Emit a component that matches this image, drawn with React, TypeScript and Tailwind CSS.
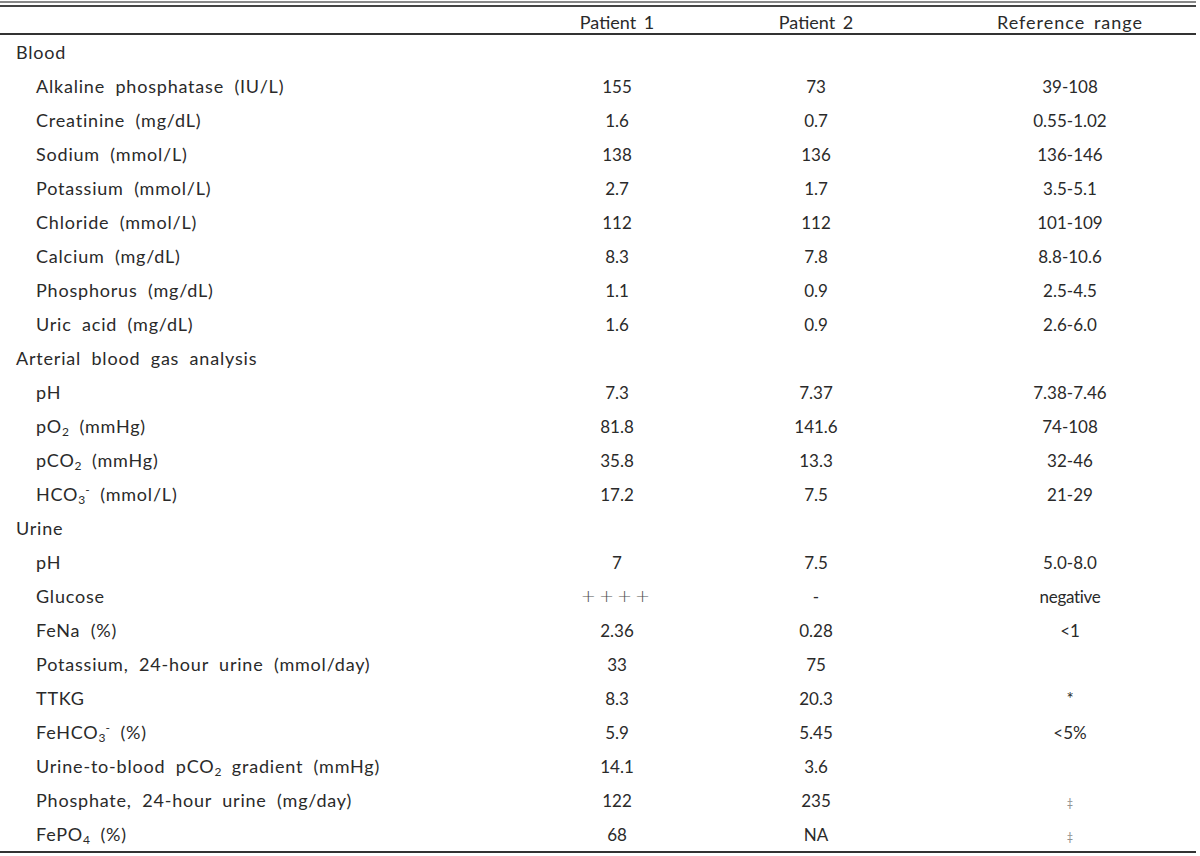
import React from "react";

type Row = { label: React.ReactNode; p1?: React.ReactNode; p2?: React.ReactNode; ref?: React.ReactNode; section?: boolean };

const Sub = ({ c }: { c: string }) => <sub className="text-[12px] align-baseline relative top-[3px] tracking-normal">{c}</sub>;
const Sup = ({ c }: { c: string }) => <sup className="text-[12px] align-baseline relative top-[-7px] tracking-normal">{c}</sup>;

const rows: Row[] = [
  { label: "Blood", section: true },
  { label: "Alkaline phosphatase (IU/L)", p1: "155", p2: "73", ref: "39-108" },
  { label: "Creatinine (mg/dL)", p1: "1.6", p2: "0.7", ref: "0.55-1.02" },
  { label: "Sodium (mmol/L)", p1: "138", p2: "136", ref: "136-146" },
  { label: "Potassium (mmol/L)", p1: "2.7", p2: "1.7", ref: "3.5-5.1" },
  { label: "Chloride (mmol/L)", p1: "112", p2: "112", ref: "101-109" },
  { label: "Calcium (mg/dL)", p1: "8.3", p2: "7.8", ref: "8.8-10.6" },
  { label: "Phosphorus (mg/dL)", p1: "1.1", p2: "0.9", ref: "2.5-4.5" },
  { label: "Uric acid (mg/dL)", p1: "1.6", p2: "0.9", ref: "2.6-6.0" },
  { label: "Arterial blood gas analysis", section: true },
  { label: "pH", p1: "7.3", p2: "7.37", ref: "7.38-7.46" },
  { label: <>pO<Sub c="2" /> (mmHg)</>, p1: "81.8", p2: "141.6", ref: "74-108" },
  { label: <>pCO<Sub c="2" /> (mmHg)</>, p1: "35.8", p2: "13.3", ref: "32-46" },
  { label: <>HCO<Sub c="3" /><Sup c="-" /> (mmol/L)</>, p1: "17.2", p2: "7.5", ref: "21-29" },
  { label: "Urine", section: true },
  { label: "pH", p1: "7", p2: "7.5", ref: "5.0-8.0" },
  { label: "Glucose", p1: <span className="font-['DejaVu_Sans'] font-extralight text-[#555] tracking-[3px] text-[18px]">++++</span>, p2: "-", ref: <span className="tracking-[-0.3px]">negative</span> },
  { label: "FeNa (%)", p1: "2.36", p2: "0.28", ref: "<1" },
  { label: "Potassium, 24-hour urine (mmol/day)", p1: "33", p2: "75", ref: "" },
  { label: "TTKG", p1: "8.3", p2: "20.3", ref: "*" },
  { label: <>FeHCO<Sub c="3" /><Sup c="-" /> (%)</>, p1: "5.9", p2: "5.45", ref: "<5%" },
  { label: <>Urine-to-blood pCO<Sub c="2" /> gradient (mmHg)</>, p1: "14.1", p2: "3.6", ref: "" },
  { label: "Phosphate, 24-hour urine (mg/day)", p1: "122", p2: "235", ref: <span className="text-[11px] text-[#888]">‡</span> },
  { label: <>FePO<Sub c="4" /> (%)</>, p1: "68", p2: "NA", ref: <span className="text-[11px] text-[#888]">‡</span> },
];

const cols = "grid grid-cols-[520px_194px_204px_278px]";

export default function App() {
  return (
    <div className="w-[1200px] h-[856px] bg-white text-[#2a2a2a] font-['Lato',sans-serif] text-[17px] leading-none">
      <div className="w-[1196px] pt-[1px]">
        <div className="h-[2px] bg-[#888]" />
        <div className="h-[2px]" />
        <div className="h-[2px] bg-[#444]" />
        <div className={`${cols} h-[28px] items-center border-b-[2px] border-[#333] pt-[3px] text-[18px] [word-spacing:3px]`}>
          <div />
          <div className="text-center">Patient 1</div>
          <div className="text-center">Patient 2</div>
          <div className="text-center pl-[26px] tracking-[1px]">Reference range</div>
        </div>
        {rows.map((r, i) => (
          <div key={i} className={`${cols} h-[34px] items-center`}>
            <div className={`${r.section ? "pl-[16px]" : "pl-[36px]"} text-[18px] tracking-[0.8px] [word-spacing:5px]`}>{r.label}</div>
            <div className="text-center">{r.p1}</div>
            <div className="text-center">{r.p2}</div>
            <div className="text-center pl-[26px]">{r.ref}</div>
          </div>
        ))}
        <div className="h-[2px] bg-[#333]" />
      </div>
    </div>
  );
}
